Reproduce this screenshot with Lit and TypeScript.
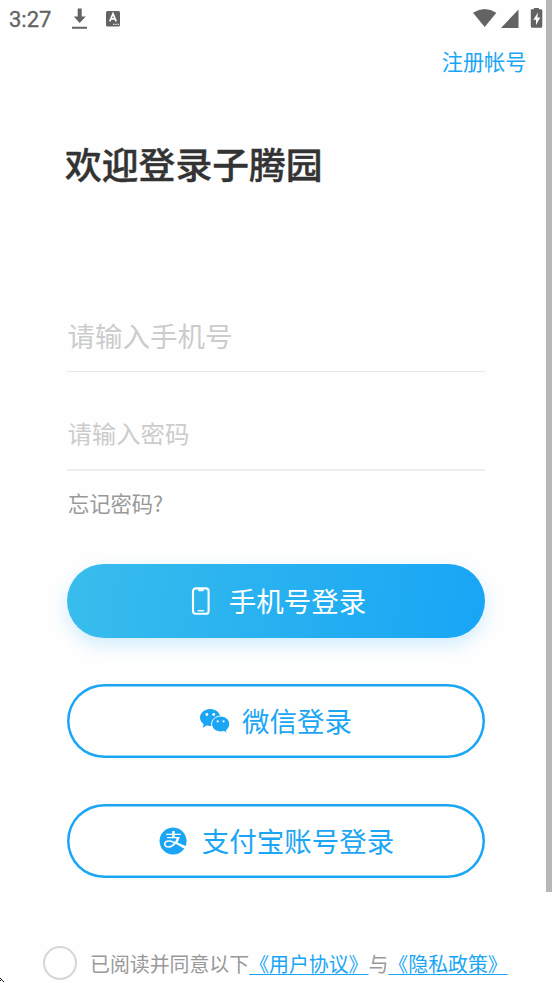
import { LitElement, html, css } from "lit";
import { customElement, property } from "lit/decorators.js";

const phoneIcon = html`<svg width="20" height="30" viewBox="0 0 20 30" fill="none" stroke="#fff">
  <rect x="2" y="2.400" width="15.600" height="25.400" rx="2.600" stroke-width="2.100" />
  <path d="M6.500 3.300 7.700 5.200h4.400l1.200-1.900z" fill="#fff" stroke="none" />
  <path d="M6.700 24.700h6.400" stroke-width="1.300" />
</svg>`;

const wechatIcon = html`<svg width="30" height="26" viewBox="0 0 30 26">
  <path fill="#1aa6f4" d="M10.2 1C4.600 1 0 4.800 0 9.600c0 2.700 1.400 5 3.700 6.500L2.600 19.700l4.100-2.100c1.200.3 2.300.5 3.500.5 5.600 0 10.200-3.800 10.200-8.500S15.800 1 10.200 1z" />
  <path fill="#1aa6f4" stroke="#fff" stroke-width="1" d="M20.600 8.100c-4.900 0-9 3.500-9 7.900s4.100 7.900 9 7.900c1.100 0 2.200-.2 3.200-.5l3.600 1.900-1-3.100c2-1.500 3.300-3.700 3.300-6.200 0-4.400-4.200-7.900-9.100-7.900z" />
  <g fill="#fff"><circle cx="6.900" cy="6.500" r="1.400" /><circle cx="13.700" cy="6.500" r="1.400" /><circle cx="17.700" cy="13.300" r="1.100" /><circle cx="23.600" cy="13.300" r="1.100" /></g>
</svg>`;

const alipayIcon = html`<svg width="28" height="28" viewBox="0 0 28 28">
  <path fill="#1aa6f4" d="M14 .4a13.600 13.600 0 1 0 11.400 21.200c-3-1.300-6-3.200-8.500-4.800-2.100 2.400-4.300 3.900-7.100 3.900-3 0-4.900-1.500-4.900-3.800 0-2.200 1.900-3.700 4.700-3.700 2 0 4.200.6 6.500 1.500.7-1.100 1.200-2.300 1.500-3.500H8.200V9.900h5V8.100H7.100V6.800h6.100V4.100h2.500v2.700h6.200v1.300h-6.200v1.800h5c-.5 2.100-1.300 4-2.300 5.700 2.700 1.200 5.400 2.500 8.200 3.500A13.600 13.600 0 0 0 14 .4zM9.400 14.800c-1.700 0-2.800.8-2.800 2.100 0 1.400 1.200 2.300 3.100 2.300 2 0 3.700-1.300 5.100-3.100-2.100-.9-3.700-1.300-5.400-1.300z" />
</svg>`;

@customElement("status-bar")
export class StatusBar extends LitElement {
  static styles = css`
    :host { display: flex; align-items: center; height: 38px; padding: 0 9px 0 9px; color: #636363; font: 400 22px/38px Roboto, "Noto Sans", sans-serif; }
    .time { width: 62px; padding-top: 1px; -webkit-text-stroke: 0.300px #636363; }
    svg { display: block; }
    .key { margin-left: 18px; }
    .end { margin-left: auto; }
  `;
  render() {
    return html`
      <span class="time">3:27</span>
      <svg width="17" height="38" viewBox="0 0 17 38" fill="#636363"><path d="M6.700 8.500h4v7.900h4L8.700 23l-5.900-6.600h3.900zM1 26.700h15v2.100H1z" /></svg>
      <svg class="key" width="14" height="38" viewBox="0 0 14 38"><rect y="11" width="14" height="15.500" rx="1.500" fill="#636363" /><path d="M3.800 21.300 7 13.600l3.200 7.700M5 18.900h4" stroke="#fff" stroke-width="1.700" fill="none" /><path d="M7 24.300h1.500m.8 0h1.500m.8 0h1.400" stroke="#fff" stroke-width="1" /></svg>
      <svg class="end" width="72" height="38" viewBox="0 0 72 38" fill="#636363">
        <path d="M2 12.700Q13.700 5.300 25.400 12.700L13.700 27z" />
        <path d="M47.500 9.500V28H30z" />
        <path fill-rule="evenodd" d="M60.500 9.300h2.400V8h5v1.300H70q1.300 0 1.300 1.300v15.600q0 1.500-1.500 1.500h-8.500q-1.500 0-1.500-1.500V10q0-.7.700-.7zM66.900 12.500l-4.500 7.200h2.600v5.200l4.200-7.300h-2.800z" />
      </svg>
    `;
  }
}

@customElement("login-button")
export class LoginButton extends LitElement {
  @property() icon = "";
  @property() label = "";
  @property({ type: Boolean, reflect: true }) primary = false;
  static styles = css`
    :host { display: block; }
    button { display: flex; align-items: center; justify-content: center; gap: 12.200px; width: 100%; height: 74px; padding: 0; border: 0; border-radius: 37px; background: #fefefe; box-shadow: inset 0 0 0 2.500px #1aa6f4; color: #1aa6f4; font: 400 27.500px/40px "Noto Sans CJK SC", sans-serif; }
    :host([primary]) button { gap: 18px; padding-left: 5px; color: #fff; background: linear-gradient(100deg, #38bdec, #18a5f5); box-shadow: 0 7px 18px rgba(26, 166, 244, 0.2); }
    button.alipay { gap: 15px; padding-left: 1px; }
    .text { margin-top: -2px; }
    svg { display: block; }
    .alipay svg { margin-top: -1px; }
  `;
  render() {
    const icons: Record<string, unknown> = { phone: phoneIcon, wechat: wechatIcon, alipay: alipayIcon };
    return html`<button class=${this.icon}>${icons[this.icon]}<span class="text">${this.label}</span></button>`;
  }
}

@customElement("app-root")
export class AppRoot extends LitElement {
  static styles = css`
    :host { display: block; position: relative; height: 983px; overflow: hidden; background: #fefefe; color: #999; font-family: "Noto Sans CJK SC", sans-serif; }
    .top { display: flex; justify-content: flex-end; padding-right: 25.500px; font-size: 21.200px; line-height: 46px; color: #1aa6f4; }
    main { padding: 0 67.500px 0 67.400px; }
    h1 { margin: 54px 0 0 -2.400px; font-size: 36.800px; line-height: 50px; font-weight: 500; color: #333; -webkit-text-stroke: 0.400px #333; }
    .field { display: block; width: 100%; box-sizing: border-box; border: 0; border-bottom: 1px solid #e8e8e8; outline: 0; padding: 0; background: none; font-family: inherit; }
    .field::placeholder { color: #ccc; opacity: 1; }
    .phone { height: 74px; margin-top: 110px; font-size: 27.500px; }
    .password { height: 75px; margin-top: 24px; font-size: 24.400px; border-bottom: 2px solid #eee; }
    .forgot { margin: 16px 0 46px; padding-left: 0.500px; font-size: 21.300px; line-height: 31px; }
    .actions { display: grid; gap: 46px; }
    footer { display: flex; align-items: center; margin: 67px 0 0 43px; height: 36px; font-size: 19.900px; line-height: 36px; white-space: nowrap; }
    .check { width: 34px; height: 34px; box-sizing: border-box; border: 2px solid #d6d6d6; border-radius: 50%; margin-right: 13px; }
    .terms { padding-top: 1px; }
    a { color: #1aa6f4; text-decoration: underline; text-decoration-thickness: 1px; text-underline-offset: 1.500px; text-decoration-skip-ink: none; }
    .scroll { position: absolute; top: 0; right: 0; width: 6px; height: 892px; background: #b7b7b7; }
    .corner { position: absolute; left: 0; bottom: 0; display: block; }
  `;
  render() {
    return html`
      <status-bar></status-bar>
      <div class="top"><span>注册帐号</span></div>
      <main>
        <h1>欢迎登录子腾园</h1>
        <input class="field phone" placeholder="请输入手机号" />
        <input class="field password" type="password" placeholder="请输入密码" />
        <div class="forgot">忘记密码?</div>
        <div class="actions">
          <login-button primary icon="phone" label="手机号登录"></login-button>
          <login-button icon="wechat" label="微信登录"></login-button>
          <login-button icon="alipay" label="支付宝账号登录"></login-button>
        </div>
      </main>
      <footer>
        <span class="check"></span>
        <span class="terms">已阅读并同意以下<a>《用户协议》</a>与<a>《隐私政策》</a></span>
      </footer>
      <div class="scroll"></div>
      <svg class="corner" width="4" height="5" viewBox="0 0 4 5"><path d="M0 0h1v1H0zM1 1h1v1H1zM0 2h1v1H0zM2 2h1v1H2zM3 3h1v1H3z" fill="#111" /></svg>
    `;
  }
}
